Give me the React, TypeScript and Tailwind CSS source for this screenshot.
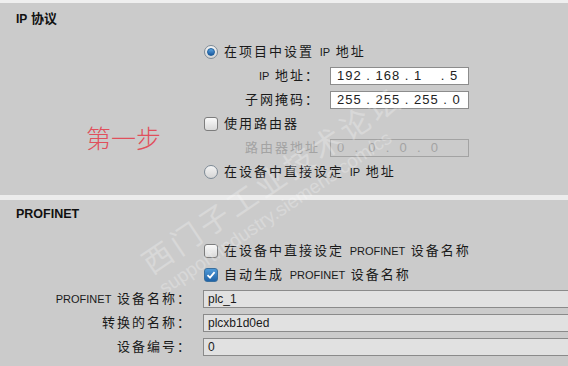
import React from "react";

const cjk = "font-['Liberation_Sans','Noto_Sans_CJK_SC',sans-serif]";

function Radio({ checked }: { checked?: boolean }) {
  return (
    <span className="flex h-[14px] w-[14px] shrink-0 items-center justify-center rounded-full border border-[#7d8a96] bg-gradient-to-b from-[#f4f4f4] to-[#d6d6d6]">
      {checked && (
        <span className="h-[8px] w-[8px] rounded-full border border-[#1e5f9c] bg-gradient-to-b from-[#5aa3e0] to-[#1a5aa0]" />
      )}
    </span>
  );
}

function Checkbox({ checked }: { checked?: boolean }) {
  if (checked) {
    return (
      <span className="flex h-[14px] w-[14px] shrink-0 items-center justify-center rounded-[3px] border border-[#3a6f9e] bg-gradient-to-b from-[#4f9ad8] to-[#1e63a8]">
        <svg width="10" height="10" viewBox="0 0 10 10">
          <path d="M1.5 5.2 L4 7.6 L8.6 2.2" fill="none" stroke="white" strokeWidth="1.8" />
        </svg>
      </span>
    );
  }
  return (
    <span className="h-[14px] w-[14px] shrink-0 rounded-[3px] border border-[#7d7d7d] bg-gradient-to-b from-[#fafafa] to-[#d9d9d9]" />
  );
}

function IpField({ value, disabled }: { value: string; disabled?: boolean }) {
  return (
    <div
      className={
        "flex h-[18px] w-[139px] items-center border pl-[6px] text-[13px] tracking-[1px] whitespace-pre " +
        (disabled
          ? "border-[#a3a3a3] bg-[#cbcbcb] text-[#a3a3a3]"
          : "border-[#8c8c8c] bg-white text-[#222]")
      }
    >
      {value}
    </div>
  );
}

function LabelRow({ label, value, disabled }: { label: React.ReactNode; value: string; disabled?: boolean }) {
  return (
    <div className="flex h-6 items-center">
      <div
        className={
          "w-[116px] text-right text-[13px] tracking-[2px] " + (disabled ? "text-[#a3a3a3]" : "text-[#1a1a1a]")
        }
      >
        {label}
      </div>
      <div className="ml-[10px]">
        <IpField value={value} disabled={disabled} />
      </div>
    </div>
  );
}

function OptionRow({ control, children }: { control: React.ReactNode; children: React.ReactNode }) {
  return (
    <div className="flex h-6 items-center gap-[6px] text-[13px] tracking-[2px] text-[#1a1a1a]">
      {control}
      <span>{children}</span>
    </div>
  );
}

function NameRow({ label, value }: { label: React.ReactNode; value: string }) {
  return (
    <div className="flex h-6 items-center">
      <div className="w-[192px] text-right text-[13px] tracking-[2px] text-[#1a1a1a]">{label}</div>
      <div className="ml-[11px] flex h-[18px] flex-1 items-center border-y border-l border-[#8a8a8a] bg-[#e1e1e1] pl-[4px] text-[12px] text-[#1a1a1a]">
        {value}
      </div>
    </div>
  );
}

const Latin = ({ children }: { children: React.ReactNode }) => (
  <span className="text-[11px] tracking-normal">{children}</span>
);

export default function App() {
  return (
    <div className={"relative h-[366px] w-[568px] overflow-hidden bg-[#cbcbcb] " + cjk}>
      <div className="h-[3px] bg-[#efefef]" />
      <div className="h-[37px] pl-4 pt-[7px] text-[13px] leading-[18px] font-bold text-[#111]">
        <span className="text-[12px]">IP</span> 协议
      </div>

      <div className="flex">
        <div className="w-[204px] pl-[86px] pt-[84px]">
          <span className="block text-[25px] leading-[30px] font-light text-[#e0505c]">第一步</span>
        </div>
        <div className="flex flex-col">
          <OptionRow control={<Radio checked />}>
            在项目中设置 <Latin>IP</Latin> 地址
          </OptionRow>
          <LabelRow label={<><Latin>IP</Latin> 地址：</>} value="192 . 168 . 1    . 5" />
          <LabelRow label="子网掩码：" value="255 . 255 . 255 . 0" />
          <OptionRow control={<Checkbox />}>使用路由器</OptionRow>
          <LabelRow label="路由器地址" value="0  .  0  .  0  .  0" disabled />
          <OptionRow control={<Radio />}>
            在设备中直接设定 <Latin>IP</Latin> 地址
          </OptionRow>
        </div>
      </div>

      <div className="mt-[11px] h-[5px] bg-[#ececec]" />
      <div className="h-[28px] pl-4 text-[12.5px] leading-[28px] font-bold text-[#111]">PROFINET</div>

      <div className="mt-[11px] flex flex-col pl-[204px]">
        <OptionRow control={<Checkbox />}>
          在设备中直接设定 <Latin>PROFINET</Latin> 设备名称
        </OptionRow>
        <OptionRow control={<Checkbox checked />}>
          自动生成 <Latin>PROFINET</Latin> 设备名称
        </OptionRow>
      </div>
      <div className="flex flex-col">
        <NameRow label={<><Latin>PROFINET</Latin> 设备名称：</>} value="plc_1" />
        <NameRow label="转换的名称：" value="plcxb1d0ed" />
        <NameRow label="设备编号：" value="0" />
      </div>

      <div className="pointer-events-none absolute left-[152px] top-[248px] origin-left -rotate-[34deg] text-white opacity-25">
        <div className="text-[30px] leading-[34px] tracking-[4px] whitespace-nowrap">西门子工业技术论坛</div>
        <div className="text-[19px] leading-[22px] whitespace-nowrap">support.industry.siemens.com/cs</div>
      </div>
    </div>
  );
}
